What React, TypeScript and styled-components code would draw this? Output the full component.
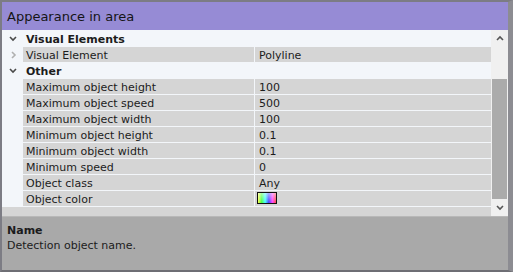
import styled, { createGlobalStyle } from "styled-components";

const GlobalStyle = createGlobalStyle`
  html, body {
    margin: 0;
    padding: 0;
    background: #ffffff;
  }
  body {
    font-family: "DejaVu Sans", Verdana, sans-serif;
    font-size: 11px;
    color: #1c1c1c;
  }
`;

const Window = styled.div`
  width: 513px;
  height: 272px;
  box-sizing: border-box;
  border-top: 2px solid #7c7c84;
  border-left: 2px solid #7c7c84;
  border-bottom: 2px solid #6e6e74;
  border-right: 5px solid #8c8c92;
  display: flex;
  flex-direction: column;
  background: #a9a9a9;
`;

const TitleBar = styled.div`
  height: 28px;
  flex: 0 0 28px;
  display: flex;
  align-items: center;
  padding-left: 5px;
  background: #968bd5;
  font-size: 13px;
  color: #151515;
`;

const Body = styled.div`
  display: flex;
  height: 186px;
  flex: 0 0 186px;
`;

const Grid = styled.div`
  width: 489px;
  display: flex;
  flex-direction: column;
  background: #d5d5d5;
`;

const Rows = styled.div`
  display: flex;
  flex-direction: column;
  padding-top: 1px;
  background: #f3f6fa;
`;

const Row = styled.div`
  display: flex;
  height: 15px;
  margin-bottom: 1px;
  line-height: 17px;
  overflow: hidden;
`;

const Expander = styled.div<{ $muted?: boolean }>`
  width: 21px;
  flex: 0 0 21px;
  display: flex;
  align-items: center;
  justify-content: center;
  padding-left: ${(p) => (p.$muted ? "3px" : "0")};
  box-sizing: border-box;
`;

const GroupLabel = styled.div`
  flex: 1;
  padding-left: 3px;
  font-weight: bold;
`;

const NameCell = styled.div`
  width: 231px;
  flex: 0 0 231px;
  margin-right: 1px;
  padding-left: 3px;
  box-sizing: border-box;
  background: #d5d5d5;
  white-space: nowrap;
`;

const ValueCell = styled.div`
  flex: 1;
  padding-left: 4px;
  background: #d5d5d5;
`;

const Swatch = styled.div`
  width: 20px;
  height: 12px;
  box-sizing: border-box;
  margin: 1px 0 0 -2px;
  border: 1px solid #111;
  background: linear-gradient(to bottom, rgba(255, 255, 255, 0.55), rgba(255, 255, 255, 0)),
    linear-gradient(to right, #ffff40, #40ff40, #40ffff, #4040ff, #ff40ff, #ff4040);
`;

const Strip = styled.div`
  flex: 1;
  background: #d5d5d5;
`;

const ScrollBar = styled.div`
  width: 17px;
  display: flex;
  flex-direction: column;
  background: #f0f0f0;
`;

const ScrollButton = styled.div`
  height: 17px;
  flex: 0 0 17px;
  display: flex;
  align-items: center;
  justify-content: center;
`;

const Thumb = styled.div`
  height: 120px;
  margin: 32px 1px 0 1px;
  background: #ababab;
`;

const Spacer = styled.div`
  flex: 1;
`;

const Divider = styled.div`
  height: 1px;
  flex: 0 0 1px;
  background: #b8b8b8;
`;

const Description = styled.div`
  flex: 1;
  padding: 6px 5px 0 5px;
  background: #a9a9a9;
  line-height: 15px;
`;

const DescTitle = styled.div`
  font-weight: bold;
`;

function Chevron({ dir, color }: { dir: "down" | "right" | "up"; color: string }) {
  const pts =
    dir === "down" ? "1,2 4,5 7,2" : dir === "up" ? "1,5 4,2 7,5" : "2,1 5,4 2,7";
  return (
    <svg width="8" height="8" viewBox="0 0 8 8">
      <polyline points={pts} fill="none" stroke={color} strokeWidth="1.6" />
    </svg>
  );
}

const properties: [string, string][] = [
  ["Maximum object height", "100"],
  ["Maximum object speed", "500"],
  ["Maximum object width", "100"],
  ["Minimum object height", "0.1"],
  ["Minimum object width", "0.1"],
  ["Minimum speed", "0"],
  ["Object class", "Any"],
];

export default function App() {
  return (
    <>
      <GlobalStyle />
      <Window>
        <TitleBar>Appearance in area</TitleBar>
        <Body>
          <Grid>
            <Rows>
              <Row>
                <Expander>
                  <Chevron dir="down" color="#4a4a4a" />
                </Expander>
                <GroupLabel>Visual Elements</GroupLabel>
              </Row>
              <Row>
                <Expander $muted>
                  <Chevron dir="right" color="#b0b0b0" />
                </Expander>
                <NameCell>Visual Element</NameCell>
                <ValueCell>Polyline</ValueCell>
              </Row>
              <Row>
                <Expander>
                  <Chevron dir="down" color="#4a4a4a" />
                </Expander>
                <GroupLabel>Other</GroupLabel>
              </Row>
              {properties.map(([name, value]) => (
                <Row key={name}>
                  <Expander />
                  <NameCell>{name}</NameCell>
                  <ValueCell>{value}</ValueCell>
                </Row>
              ))}
              <Row>
                <Expander />
                <NameCell>Object color</NameCell>
                <ValueCell>
                  <Swatch />
                </ValueCell>
              </Row>
            </Rows>
            <Strip />
          </Grid>
          <ScrollBar>
            <ScrollButton>
              <Chevron dir="up" color="#555" />
            </ScrollButton>
            <Thumb />
            <Spacer />
            <ScrollButton>
              <Chevron dir="down" color="#555" />
            </ScrollButton>
          </ScrollBar>
        </Body>
        <Divider />
        <Description>
          <DescTitle>Name</DescTitle>
          <div>Detection object name.</div>
        </Description>
      </Window>
    </>
  );
}
